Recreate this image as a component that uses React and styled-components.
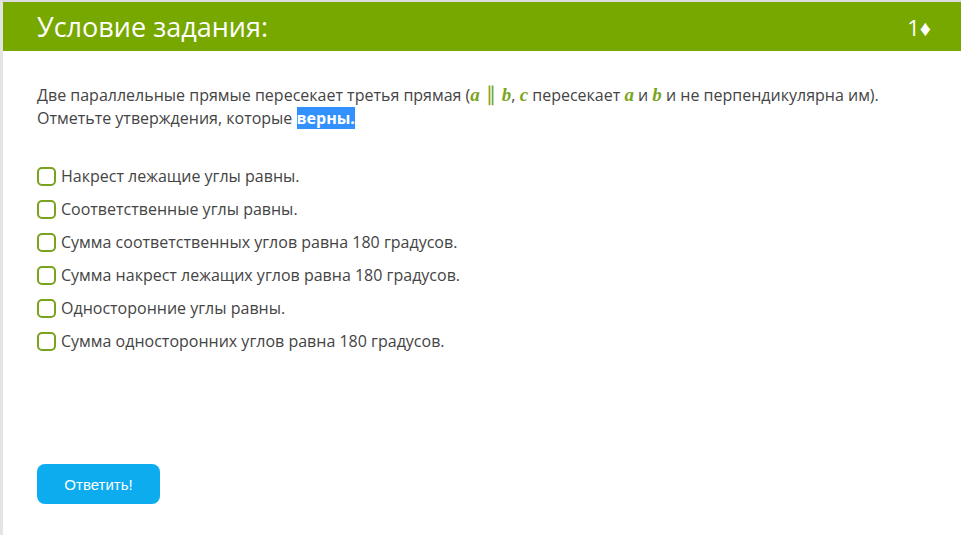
import React from "react";
import styled, { createGlobalStyle } from "styled-components";

const Global = createGlobalStyle`
  html, body { margin: 0; padding: 0; background: #fff; }
  body { font-family: "Open Sans", "Noto Sans", sans-serif; }
`;

const Page = styled.div`
  height: 535px;
  box-sizing: border-box;
  border-top: 2px solid #dcdcdc;
  border-left: 3px solid #e4e4e4;
  display: flex;
  flex-direction: column;
`;

const Header = styled.header`
  height: 49px;
  background: #77a800;
  display: flex;
  align-items: center;
  justify-content: space-between;
  padding: 0 30px 0 34px;
  color: #fff;
`;

const Title = styled.h1`
  margin: 0;
  font-size: 27px;
  font-weight: 400;
`;

const Score = styled.span`
  font-size: 22px;
`;

const Body = styled.main`
  padding: 32px 34px 0;
  display: flex;
  flex-direction: column;
`;

const Question = styled.p`
  margin: 0;
  font-size: 16px;
  line-height: 23px;
  color: #444;
`;

const M = styled.i`
  font-family: "Liberation Serif", "DejaVu Serif", serif;
  font-weight: 700;
  font-style: italic;
  color: #7aa520;
  font-size: 19px;
`;

const Par = styled.span`
  color: #7aa520;
  font-family: "Liberation Serif", serif;
  font-size: 20px;
  margin: 0 6px;
`;

const Sel = styled.span`
  background: #3390ff;
  color: #fff;
  font-weight: 700;
`;

const Options = styled.ul`
  list-style: none;
  margin: 35px 0 0;
  padding: 0;
  display: flex;
  flex-direction: column;
  gap: 11px;
`;

const Option = styled.li`
  display: flex;
  align-items: center;
  height: 22px;
  font-size: 16px;
  color: #444;
`;

const Box = styled.span`
  width: 15px;
  height: 15px;
  border: 2px solid #7aa21e;
  border-radius: 5px;
  margin-right: 5px;
  flex: none;
`;

const Button = styled.button`
  margin-top: 112px;
  align-self: flex-start;
  width: 123px;
  height: 40px;
  border: none;
  border-radius: 8px;
  background: #0cacee;
  color: #fff;
  font-family: "Liberation Sans", Arial, sans-serif;
  font-size: 15px;
`;

const options = [
  "Накрест лежащие углы равны.",
  "Соответственные углы равны.",
  "Сумма соответственных углов равна 180 градусов.",
  "Сумма накрест лежащих углов равна 180 градусов.",
  "Односторонние углы равны.",
  "Сумма односторонних углов равна 180 градусов.",
];

export default function App() {
  return (
    <>
      <Global />
      <Page>
        <Header>
          <Title>Условие задания:</Title>
          <Score>1♦</Score>
        </Header>
        <Body>
          <Question>
            Две параллельные прямые пересекает третья прямая (<M>a</M>
            <Par>∥</Par>
            <M>b</M>, <M>c</M> пересекает <M>a</M> и <M>b</M> и не перпендикулярна им).
            <br />
            Отметьте утверждения, которые <Sel>верны.</Sel>
          </Question>
          <Options>
            {options.map((o) => (
              <Option key={o}>
                <Box />
                {o}
              </Option>
            ))}
          </Options>
          <Button>Ответить!</Button>
        </Body>
      </Page>
    </>
  );
}
